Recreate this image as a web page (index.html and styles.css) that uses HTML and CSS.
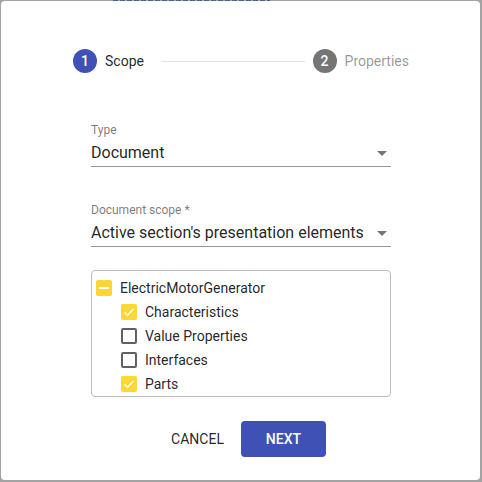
FILE: index.html
```html
<!DOCTYPE html>
<html>
<head>
<meta charset="utf-8">
<link rel="stylesheet" href="styles.css">
</head>
<body>
<div class="dialog">
  <div class="stepper">
    <div class="step">
      <span class="step-num active">1</span>
      <span class="step-label">Scope</span>
    </div>
    <div class="step-line"></div>
    <div class="step">
      <span class="step-num">2</span>
      <span class="step-label muted">Properties</span>
    </div>
  </div>

  <div class="content">
    <div class="field">
      <div class="field-label">Type</div>
      <div class="field-value"><span>Document</span><span class="arrow"></span></div>
    </div>
    <div class="field second">
      <div class="field-label">Document scope *</div>
      <div class="field-value"><span>Active section's presentation elements</span><span class="arrow"></span></div>
    </div>

    <div class="tree">
      <div class="row">
        <span class="cb indeterminate"><span class="dash"></span></span>
        <span class="row-text">ElectricMotorGenerator</span>
      </div>
      <div class="row child">
        <span class="cb checked"><svg viewBox="0 0 16 16" width="16" height="16"><path d="M3.5 8.2 L6.5 11.2 L12.5 5" fill="none" stroke="#fff" stroke-width="1.4"/></svg></span>
        <span class="row-text">Characteristics</span>
      </div>
      <div class="row child">
        <span class="cb"></span>
        <span class="row-text">Value Properties</span>
      </div>
      <div class="row child">
        <span class="cb"></span>
        <span class="row-text">Interfaces</span>
      </div>
      <div class="row child">
        <span class="cb checked"><svg viewBox="0 0 16 16" width="16" height="16"><path d="M3.5 8.2 L6.5 11.2 L12.5 5" fill="none" stroke="#fff" stroke-width="1.4"/></svg></span>
        <span class="row-text">Parts</span>
      </div>
    </div>
  </div>

  <div class="actions">
    <button class="btn text-btn">CANCEL</button>
    <button class="btn primary">NEXT</button>
  </div>
</div>
</body>
</html>
```

FILE: styles.css
```css
html, body {
  margin: 0;
  padding: 0;
}
body {
  width: 482px;
  height: 482px;
  background-color: #a3a3a3;
  background-image: repeating-linear-gradient(to right, #4a6585 0, #4a6585 5px, #9aa6b4 5px, #9aa6b4 7px);
  background-repeat: no-repeat;
  background-position: 113px 0;
  background-size: 157px 1px;
  font-family: Roboto, "Noto Sans", sans-serif;
  color: rgba(0,0,0,.87);
  box-sizing: border-box;
  padding: 1px 2px 2px 1px;
  overflow: hidden;
}
.dialog {
  width: 479px;
  height: 479px;
  background: #fff;
  border-radius: 4px;
  box-sizing: border-box;
  display: flex;
  flex-direction: column;
}
.stepper {
  display: flex;
  align-items: center;
  padding: 0 71px 0 72px;
  height: 72px;
  margin-top: 24px;
}
.step {
  display: flex;
  align-items: center;
  gap: 8px;
}
.step-num {
  width: 24px;
  height: 24px;
  border-radius: 50%;
  background: #757575;
  color: #fff;
  font-size: 14px;
  display: flex;
  align-items: center;
  justify-content: center;
  font-weight: 500;
}
.step-num.active {
  background: #3f51b5;
}
.step-label {
  font-size: 14px;
  color: rgba(0,0,0,.87);
}
.step-label.muted {
  color: rgba(0,0,0,.42);
}
.step-line {
  flex: 1;
  height: 1px;
  background: #e0e0e0;
  margin: 0 8px 0 18px;
}
.content {
  padding: 25px 89px 0 90px;
  display: flex;
  flex-direction: column;
}
.field {
  display: flex;
  flex-direction: column;
  border-bottom: 1px solid rgba(0,0,0,.42);
}
.field.second {
  margin-top: 35px;
}
.field-label {
  font-size: 12px;
  line-height: 16px;
  color: rgba(0,0,0,.54);
}
.field-value {
  margin-top: 3px;
  font-size: 16px;
  line-height: 24px;
  padding-bottom: 1px;
  display: flex;
  align-items: center;
  justify-content: space-between;
}
.arrow {
  width: 0;
  height: 0;
  border-left: 5px solid transparent;
  border-right: 5px solid transparent;
  border-top: 5px solid rgba(0,0,0,.54);
  margin-right: 4px;
}
.tree {
  margin-top: 23px;
  border: 1px solid #bdbdbd;
  border-radius: 4px;
  padding: 5px 0 0 4px;
  display: flex;
  flex-direction: column;
}
.row {
  height: 24px;
  display: flex;
  align-items: center;
  gap: 8px;
  font-size: 14px;
}
.row.child {
  padding-left: 25px;
}
.cb {
  width: 16px;
  height: 16px;
  box-sizing: border-box;
  border: 2px solid #616161;
  border-radius: 2px;
  display: flex;
  align-items: center;
  justify-content: center;
}
.cb.checked, .cb.indeterminate {
  border: none;
  background: #fdd835;
}
.cb svg {
  display: block;
}
.dash {
  width: 10px;
  height: 2px;
  background: #fff;
}
.actions {
  display: flex;
  justify-content: center;
  align-items: center;
  margin-top: 24px;
  gap: 1px;
}
.btn {
  font-family: Roboto, "Noto Sans", sans-serif;
  font-size: 14px;
  height: 36px;
  border: none;
  border-radius: 4px;
  background: transparent;
  cursor: pointer;
}
.text-btn {
  padding: 0 16px;
  color: rgba(0,0,0,.87);
  font-weight: 400;
}
.primary {
  width: 85px;
  background: #3f51b5;
  color: #fff;
  font-weight: 500;
}
```
